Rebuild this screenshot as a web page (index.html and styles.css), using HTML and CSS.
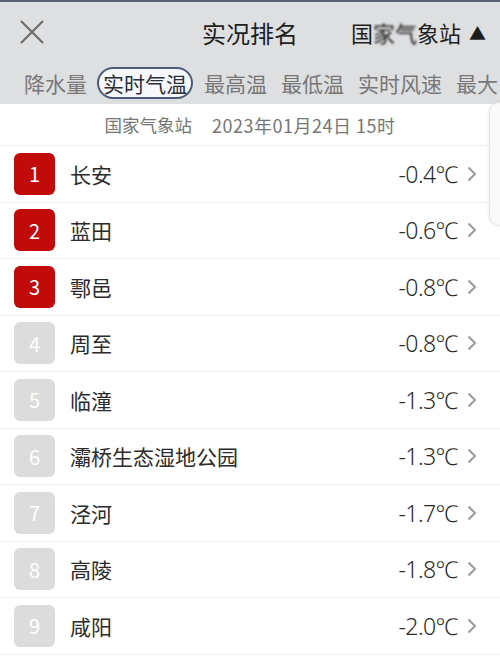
FILE: index.html
```html
<!doctype html>
<html>
  <head>
    <meta charset="utf-8">
    <link rel="stylesheet" href="styles.css">
  </head>
  <body>
    <div class="topline"></div>
    <header class="head">
      <div class="titlebar">
        <svg class="close" width="24" height="24" viewBox="0 0 24 24">
          <path d="M1 1 L23 23 M23 1 L1 23" stroke="#6a6a6a" stroke-width="2" fill="none"/>
        </svg>
        <div class="title">实况排名</div>
        <div class="station">国<span class="smudge">家气</span>象站<span class="tri">▲</span></div>
      </div>
      <nav class="tabs">
        <span class="tab">降水量</span>
        <span class="tab active">实时气温</span>
        <span class="tab">最高温</span>
        <span class="tab">最低温</span>
        <span class="tab">实时风速</span>
        <span class="tab">最大</span>
      </nav>
    </header>

    <div class="sub"><span>国家气象站</span><span class="date">2023年01月24日 15时</span></div>

    <ul class="list">
      <li class="row"><span class="rank top">1</span><span class="name">长安</span><span class="temp">-0.4℃</span><svg class="chev" width="10" height="16" viewBox="0 0 10 16"><path d="M1.5 1.5 L8 8 L1.5 14.5" stroke="#9a9a9a" stroke-width="2" fill="none"/></svg></li>
      <li class="row"><span class="rank top">2</span><span class="name">蓝田</span><span class="temp">-0.6℃</span><svg class="chev" width="10" height="16" viewBox="0 0 10 16"><path d="M1.5 1.5 L8 8 L1.5 14.5" stroke="#9a9a9a" stroke-width="2" fill="none"/></svg></li>
      <li class="row"><span class="rank top">3</span><span class="name">鄠邑</span><span class="temp">-0.8℃</span><svg class="chev" width="10" height="16" viewBox="0 0 10 16"><path d="M1.5 1.5 L8 8 L1.5 14.5" stroke="#9a9a9a" stroke-width="2" fill="none"/></svg></li>
      <li class="row"><span class="rank">4</span><span class="name">周至</span><span class="temp">-0.8℃</span><svg class="chev" width="10" height="16" viewBox="0 0 10 16"><path d="M1.5 1.5 L8 8 L1.5 14.5" stroke="#9a9a9a" stroke-width="2" fill="none"/></svg></li>
      <li class="row"><span class="rank">5</span><span class="name">临潼</span><span class="temp">-1.3℃</span><svg class="chev" width="10" height="16" viewBox="0 0 10 16"><path d="M1.5 1.5 L8 8 L1.5 14.5" stroke="#9a9a9a" stroke-width="2" fill="none"/></svg></li>
      <li class="row"><span class="rank">6</span><span class="name">灞桥生态湿地公园</span><span class="temp">-1.3℃</span><svg class="chev" width="10" height="16" viewBox="0 0 10 16"><path d="M1.5 1.5 L8 8 L1.5 14.5" stroke="#9a9a9a" stroke-width="2" fill="none"/></svg></li>
      <li class="row"><span class="rank">7</span><span class="name">泾河</span><span class="temp">-1.7℃</span><svg class="chev" width="10" height="16" viewBox="0 0 10 16"><path d="M1.5 1.5 L8 8 L1.5 14.5" stroke="#9a9a9a" stroke-width="2" fill="none"/></svg></li>
      <li class="row"><span class="rank">8</span><span class="name">高陵</span><span class="temp">-1.8℃</span><svg class="chev" width="10" height="16" viewBox="0 0 10 16"><path d="M1.5 1.5 L8 8 L1.5 14.5" stroke="#9a9a9a" stroke-width="2" fill="none"/></svg></li>
      <li class="row"><span class="rank">9</span><span class="name">咸阳</span><span class="temp">-2.0℃</span><svg class="chev" width="10" height="16" viewBox="0 0 10 16"><path d="M1.5 1.5 L8 8 L1.5 14.5" stroke="#9a9a9a" stroke-width="2" fill="none"/></svg></li>
    </ul>

    <div class="ghost"></div>
  </body>
</html>
```

FILE: styles.css
```css
body {
  margin: 0;
  width: 500px;
  height: 659px;
  overflow: hidden;
  background: #ffffff;
  font-family: "Noto Sans CJK SC", "Noto Sans", sans-serif;
  position: relative;
}

.topline {
  height: 2px;
  background: #5b6274;
}

.head {
  background: #dedfe1;
}

.titlebar {
  height: 60px;
  display: flex;
  align-items: center;
  position: relative;
}

.close {
  margin-left: 20px;
}

.title {
  position: absolute;
  left: 0;
  right: 0;
  text-align: center;
  font-size: 24px;
  color: #1e1e1e;
  pointer-events: none;
}

.station {
  margin-left: auto;
  margin-right: 14px;
  font-size: 22px;
  color: #1e1e1e;
  position: relative;
  z-index: 1;
}

.smudge {
  filter: blur(1.2px);
}

.tri {
  font-size: 17px;
  margin-left: 8px;
  position: relative;
  top: -2px;
}

.tabs {
  height: 42px;
  display: flex;
  align-items: center;
  white-space: nowrap;
  overflow: hidden;
  padding-left: 24px;
  gap: 14px;
}

.tab {
  font-size: 21px;
  color: #777777;
  flex: none;
  line-height: 28px;
}

.tab.active {
  color: #2a2f3a;
  border: 2px solid #4b5a78;
  border-radius: 16px;
  background: #f6f8fb;
  padding: 0 4px;
  margin-left: -4px;
  margin-right: -3px;
}

.sub {
  height: 41px;
  display: flex;
  align-items: center;
  justify-content: center;
  gap: 20px;
  font-size: 17.5px;
  color: #767676;
  border-bottom: 1px solid #efefef;
}

.date {
  letter-spacing: 0.5px;
  font-size: 18px;
}

.list {
  list-style: none;
  margin: 0;
  padding: 0;
}

.row {
  height: 55.5px;
  border-bottom: 1px solid #f0f0f0;
  display: flex;
  align-items: center;
  padding-left: 14px;
  padding-right: 23px;
}

.rank {
  width: 41px;
  height: 42px;
  border-radius: 6px;
  background: #dcdcdc;
  color: #ffffff;
  font-size: 20px;
  display: flex;
  align-items: center;
  justify-content: center;
  flex: none;
}

.rank.top {
  background: #c10a0a;
}

.name {
  margin-left: 15px;
  font-size: 21px;
  color: #2b2b2b;
}

.temp {
  margin-left: auto;
  font-size: 23px;
  color: #2b2b2b;
  font-family: "Noto Sans", sans-serif;
  font-weight: 300;
  letter-spacing: -0.5px;
}

.chev {
  margin-left: 9px;
  flex: none;
}

.ghost {
  position: absolute;
  left: 489px;
  top: 102px;
  width: 30px;
  height: 122px;
  border: 1px solid #e6e6e6;
  border-radius: 10px;
  background: #fafafa;
  box-shadow: -1px 0 3px rgba(0, 0, 0, 0.06);
}
```
